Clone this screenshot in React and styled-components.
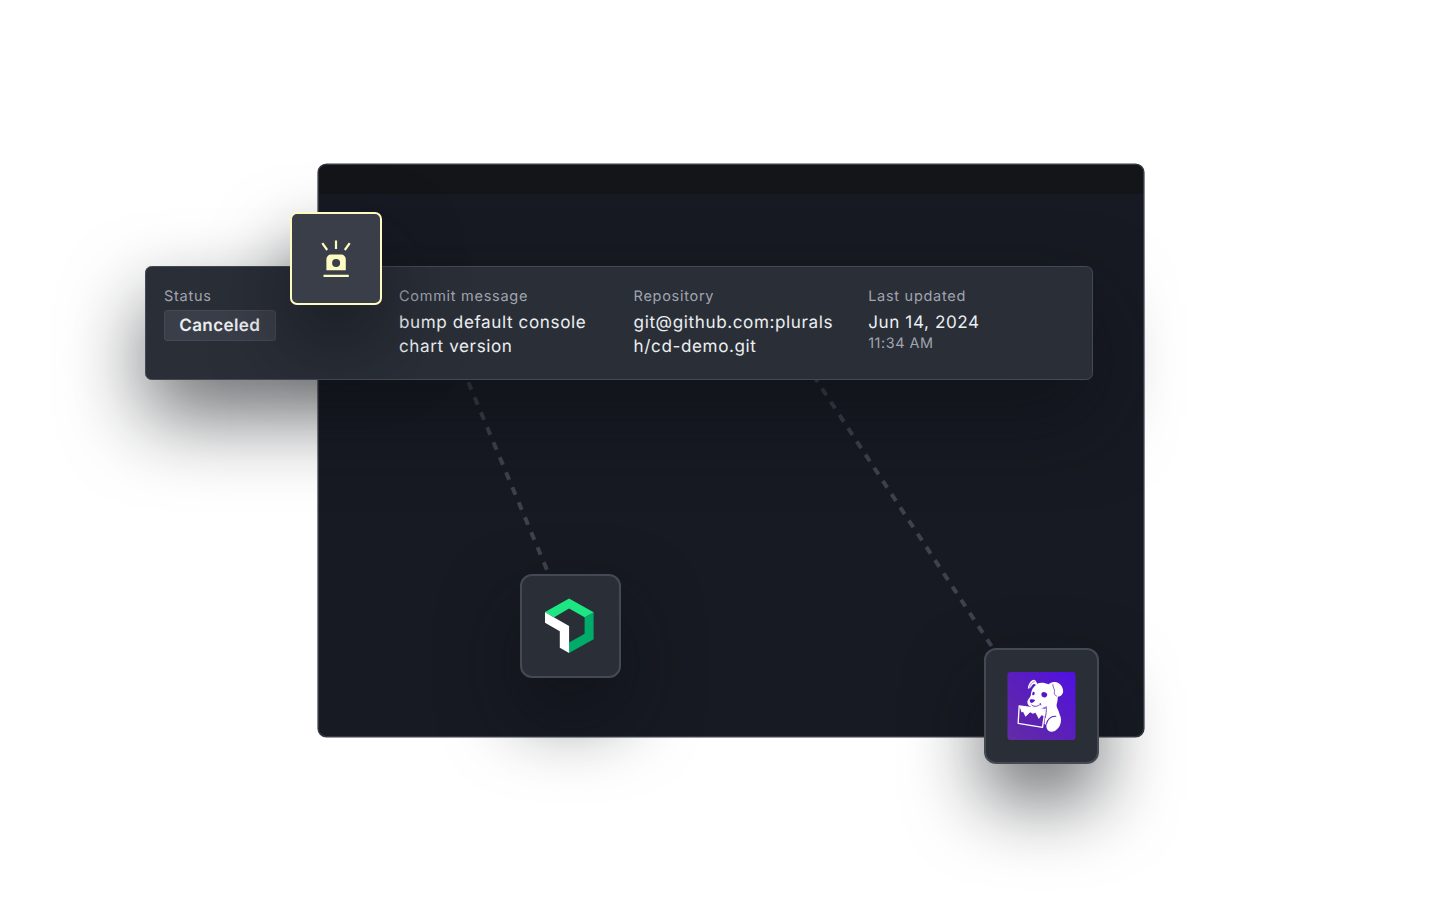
import React from "react";
import styled, { createGlobalStyle } from "styled-components";

const Global = createGlobalStyle`
  * { box-sizing: border-box; }
  body {
    margin: 0;
    background: #fff;
    overflow: hidden;
    font-family: Inter, "Liberation Sans", sans-serif;
    text-rendering: geometricPrecision;
  }
`;

const Stage = styled.main`
  position: relative;
  width: 1440px;
  height: 900px;
  overflow: hidden;
  padding: 163.5px 296px 0 318px;
`;

const Panel = styled.section`
  width: 825.5px;
  height: 573px;
  border: 1px solid #363a45;
  border-radius: 8.5px;
  background: #171a22;
  box-shadow: 0 0 0 0.6px #363a45;
  overflow: hidden;
`;

const PanelHeader = styled.header`
  height: 29px;
  background: #131519;
`;

const Links = styled.svg`
  position: absolute;
  left: 0;
  top: 0;
`;

const Card = styled.article`
  position: absolute;
  left: 144.5px;
  top: 265.5px;
  width: 948.5px;
  height: 114.5px;
  display: grid;
  grid-template-columns: 235px 234.6px 234.6px 1fr;
  padding: 20.5px 0 0 18.5px;
  border: 1px solid #454954;
  border-radius: 6.5px;
  background: #2a2e37;
  box-shadow: 0 37px 80px rgba(14, 16, 21, 0.6);
`;

const Field = styled.div`
  display: flex;
  flex-direction: column;
  align-items: flex-start;
`;

const Label = styled.span`
  font-size: 14.5px;
  line-height: 20px;
  letter-spacing: 0.72px;
  color: #a1a5b0;
  white-space: nowrap;
`;

const Value = styled.span`
  margin-top: 4px;
  font-size: 17.1px;
  line-height: 24px;
  letter-spacing: 0.6px;
  color: #ebeff0;
  white-space: nowrap;
`;

const Time = styled.span`
  margin-top: -1px;
  font-size: 14.4px;
  line-height: 20px;
  letter-spacing: 0.55px;
  color: #a1a5b0;
`;

const Chip = styled.span`
  display: flex;
  align-items: center;
  justify-content: center;
  width: 111.5px;
  height: 31px;
  margin-top: 3.4px;
  padding: 0 0 1.5px 0;
  border: 1px solid #454954;
  border-radius: 3px;
  background: #3a3e49;
  color: #ebeff0;
  font-size: 17.1px;
  font-weight: 600;
  letter-spacing: 0.35px;
`;

const Tile = styled.div`
  position: absolute;
  left: ${(p) => p.$x}px;
  top: ${(p) => p.$y}px;
  width: ${(p) => p.$w}px;
  height: ${(p) => p.$h}px;
  display: flex;
  align-items: center;
  justify-content: center;
  border: 2px solid ${(p) => (p.$alert ? "#fff9c2" : "#454954")};
  border-radius: ${(p) => (p.$alert ? 7 : 12)}px;
  background: ${(p) => (p.$alert ? "#3a3e49" : "#2a2e37")};
  box-shadow: 0 37px 74px rgba(14, 16, 21, 0.6);
`;

const Siren = () => (
  <svg width="36" height="50" viewBox="0 0 36 50" fill="none" stroke="#fff9c2" strokeWidth="2.2">
    <path d="M18 6.5V15M4.3 9.2L9.2 16M31.7 9.2L26.8 16M5.5 41.8H30.8" />
    <path
      fill="#fff9c2"
      stroke="none"
      fillRule="evenodd"
      d="M8.4 36.2V25.2a4.6 4.6 0 0 1 4.6-4.6h10.2a4.6 4.6 0 0 1 4.6 4.6v11zM18.1 24.9a4 4 0 1 0 0 8 4 4 0 0 0 0-8z"
    />
  </svg>
);

const Hexagon = () => (
  <svg width="50" height="56" viewBox="0.4 0 50 56">
    <path fill="#00ac69" d="M40 19.3L49 14v27.3L24.5 55V44.5L40 35.7z" />
    <path fill="#1ce783" d="M40 19.3L24.5 10.6 9.6 19.3 0 14.2 24.5 .6 49 14.2z" />
    <path fill="#fff" d="M15.2 33.2L0 24.6V14l24.5 13.9V55L15.2 49.8z" />
  </svg>
);

const Hound = () => (
  <svg width="69" height="68" viewBox="21.5 22 207 204">
    <defs>
      <linearGradient id="violet" x1="0" y1="1" x2="1" y2="0">
        <stop offset="0" stopColor="#632ca6" />
        <stop offset="0.45" stopColor="#5b20b8" />
        <stop offset="1" stopColor="#5010e4" />
      </linearGradient>
    </defs>
    <rect x="23" y="22" width="204" height="204" rx="9" fill="url(#violet)" />
    <path
      fill="#fff"
      d="M84 72C85 60 91 48 101 45C107 45 110 51 112 57C122 52 137 55 146 59C151 54 160 50 170 53C182 56 189 67 190 79C190 88 183 96 174 96C173 103 174 109 171 117C168 123 173 131 176 138L180 151C184 158 185 170 181 180C177 191 165 202 154 201C144 200 138 190 140 180L134 178L137 127L128 130C116 134 106 130 98 128C87 125 81 118 83 109C85 103 91 99 93 92C93 84 96 77 99 71C102 67 105 64 108 61C104 57 101 57 97 62C94 66 92 70 89 71Z"
    />
    <g fill="none" stroke="#5b20b8" strokeWidth="2.6" strokeLinecap="round">
      <path d="M104 50C96 52 91 60 89 68" strokeWidth="1.5" />
      <path d="M159 60C158 67 165 73 164 80C163 87 162 90 170 94" strokeWidth="2.2" />
      <path d="M96 121C104 129 116 124 121 119M121 116L123 121" />
      <path d="M140 178C142 164 153 154 168 155" strokeWidth="3.2" />
      <path d="M139 126C141 137 138 151 136 160" />
    </g>
    <g fill="#5816c6">
      <path d="M126 84C130 80 139 82 142 88C143 95 137 100 131 98C125 96 123 89 126 84Z" />
      <path d="M99 82C103 80 106 84 104 89C101 94 96 91 97 87Z" />
      <path d="M90 105C95 103 101 104 106 106C105 111 99 114 96 115C92 114 89 110 90 105Z" />
    </g>
    <path fill="#5d22b4" stroke="#fff" strokeWidth="4" strokeLinejoin="round" d="M58 124L136 134L128 188L55 176Z" />
    <path fill="#fff" d="M59 125L135 134L133 155L125 152L117 163L107 144L99 147L91 143L77 156L70 142L65 143Z" />
  </svg>
);

const nodes = [
  { x: 289.7, y: 212.3, w: 92.8, h: 93, alert: true, icon: <Siren /> },
  { x: 519.5, y: 574, w: 101.5, h: 104, icon: <Hexagon /> },
  { x: 983.6, y: 648, w: 115.9, h: 115.7, icon: <Hound /> },
];

const fields = [
  { label: "Commit message", lines: ["bump default console", "chart version"] },
  { label: "Repository", lines: ["git@github.com:plurals", "h/cd-demo.git"] },
  { label: "Last updated", lines: ["Jun 14, 2024"], time: "11:34 AM" },
];

export default function App() {
  return (
    <Stage>
      <Global />
      <Panel>
        <PanelHeader />
      </Panel>
      <Links width="1440" height="900" fill="none" stroke="#3f424d" strokeWidth="4">
        <path d="M546.9 569.7L461.5 366" strokeDasharray="8 8.27" />
        <path d="M991.5 646L809.8 370" strokeDasharray="8 7.8" />
      </Links>
      <Card>
        <Field>
          <Label>Status</Label>
          <Chip>Canceled</Chip>
        </Field>
        {fields.map((f) => (
          <Field key={f.label}>
            <Label>{f.label}</Label>
            <Value>
              {f.lines.map((line) => (
                <div key={line}>{line}</div>
              ))}
            </Value>
            {f.time && <Time>{f.time}</Time>}
          </Field>
        ))}
      </Card>
      {nodes.map((n) => (
        <Tile key={n.x} $x={n.x} $y={n.y} $w={n.w} $h={n.h} $alert={n.alert}>
          {n.icon}
        </Tile>
      ))}
    </Stage>
  );
}
